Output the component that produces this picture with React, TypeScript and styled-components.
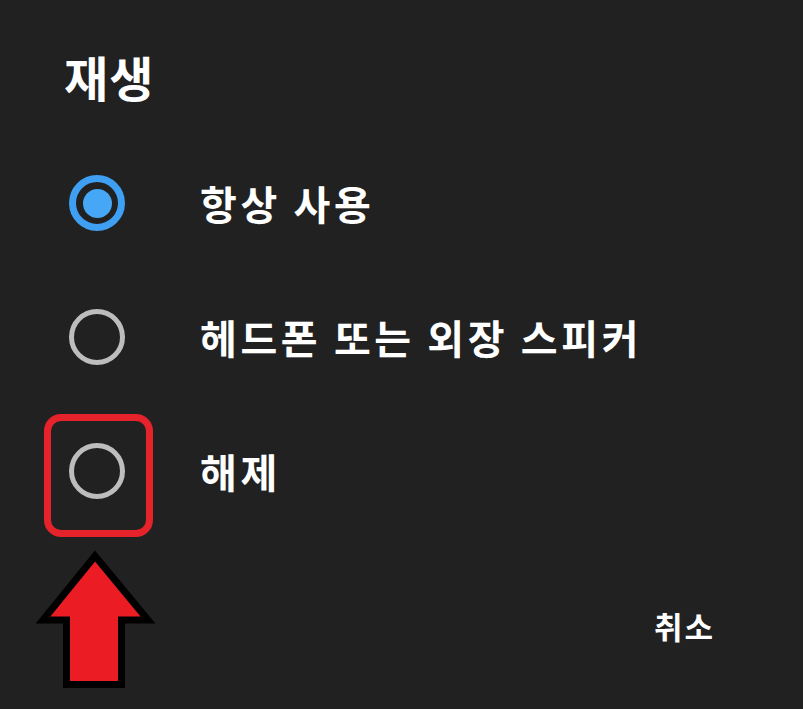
import styled, { createGlobalStyle } from "styled-components";

const GlobalStyle = createGlobalStyle`
  html, body {
    margin: 0;
    padding: 0;
    background: #212121;
  }
  body {
    font-family: "Noto Sans CJK KR", "Noto Sans", sans-serif;
    color: #fff;
  }
`;

const Dialog = styled.div`
  width: 803px;
  height: 709px;
  background-color: #212121;
  overflow: hidden;
  display: flex;
  flex-direction: column;
`;

const Title = styled.h1`
  font-size: 48px;
  line-height: 48px;
  font-weight: 700;
  letter-spacing: 1px;
  margin: 52px 0 0 64px;
  color: #fff;
`;

const OptionList = styled.div`
  margin-top: 36px;
  padding-left: 69px;
  display: flex;
  flex-direction: column;
`;

const Row = styled.label`
  height: 134px;
  display: flex;
  align-items: center;
  gap: 75px;
`;

const RadioWrap = styled.div`
  position: relative;
  width: 56px;
  height: 56px;
  flex-shrink: 0;
`;

const Radio = styled.div<{ $checked?: boolean }>`
  box-sizing: border-box;
  width: 56px;
  height: 56px;
  border-radius: 50%;
  border: ${(p) => (p.$checked ? "7px solid #3f9ff2" : "5px solid #bdbdbd")};
  display: flex;
  align-items: center;
  justify-content: center;
`;

const Dot = styled.div`
  width: 29px;
  height: 29px;
  border-radius: 50%;
  background-color: #45a7f6;
`;

const Label = styled.span`
  font-size: 40px;
  line-height: 1;
  font-weight: 700;
  letter-spacing: 3.6px;
  color: #fff;
`;

const Highlight = styled.div`
  position: absolute;
  left: -25px;
  top: -29px;
  width: 109px;
  height: 123px;
  box-sizing: border-box;
  border: 7px solid #e6222b;
  border-radius: 17px;
`;

const Arrow = styled.svg`
  position: absolute;
  left: -39px;
  top: 100px;
`;

const Footer = styled.div`
  display: flex;
  justify-content: flex-end;
  padding: 72px 88px 0 0;
`;

const CancelButton = styled.button`
  background: none;
  border: none;
  padding: 0;
  font-family: "Noto Sans CJK KR", "Noto Sans", sans-serif;
  font-size: 31px;
  line-height: 31px;
  font-weight: 700;
  letter-spacing: 2px;
  color: #fff;
`;

const options = ["항상 사용", "헤드폰 또는 외장 스피커", "해제"];

export default function App() {
  const selected = 0;
  return (
    <>
      <GlobalStyle />
      <Dialog>
        <Title>재생</Title>
        <OptionList>
          {options.map((text, i) => (
            <Row key={text}>
              <RadioWrap>
                <Radio $checked={i === selected}>{i === selected && <Dot />}</Radio>
                {i === 2 && (
                  <>
                    <Highlight />
                    <Arrow width="130" height="150" viewBox="0 0 130 150">
                      <polygon
                        points="65,13 13,77 36.5,77 36.5,141.5 91.5,141.5 91.5,77 118,77"
                        fill="#ec1c24"
                        stroke="#000"
                        strokeWidth="7"
                        strokeLinejoin="miter"
                      />
                    </Arrow>
                  </>
                )}
              </RadioWrap>
              <Label>{text}</Label>
            </Row>
          ))}
        </OptionList>
        <Footer>
          <CancelButton>취소</CancelButton>
        </Footer>
      </Dialog>
    </>
  );
}
